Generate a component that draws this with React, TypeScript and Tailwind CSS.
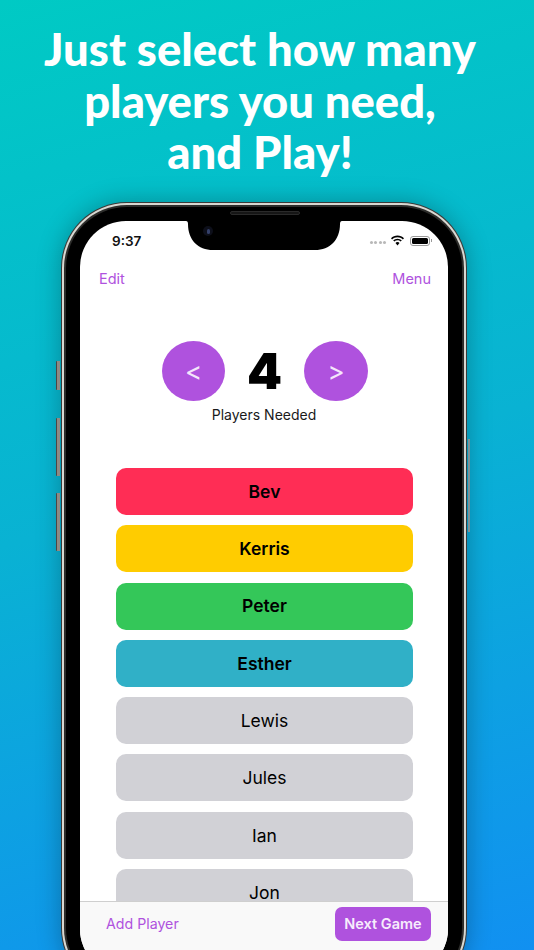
import React from "react";

const players = [
  { name: "Bev", cls: "bg-[#ff2d55] font-semibold" },
  { name: "Kerris", cls: "bg-[#ffcc00] font-semibold" },
  { name: "Peter", cls: "bg-[#34c759] font-semibold" },
  { name: "Esther", cls: "bg-[#30b0c7] font-semibold" },
  { name: "Lewis", cls: "bg-[#d1d1d6]" },
  { name: "Jules", cls: "bg-[#d1d1d6]" },
  { name: "Ian", cls: "bg-[#d1d1d6]" },
  { name: "Jon", cls: "bg-[#d1d1d6]" },
];

function Notch() {
  return (
    <svg className="absolute left-[105px] top-[-3px] z-10" width="158" height="33" viewBox="0 0 158 33">
      <path d="M0 0 H158 V3 H157 Q155 3 155 6 C155 22 145 32 130 32 H28 C13 32 3 22 3 6 Q3 3 1 3 H0 Z" fill="#000" />
    </svg>
  );
}

function StatusIcons() {
  return (
    <div className="flex items-center">
      <div className="flex gap-[1.5px] mr-[4px] mt-[3px]">
        <span className="block w-[3px] h-[3px] rounded-full bg-[#b8b8b8]" />
        <span className="block w-[3px] h-[3px] rounded-full bg-[#b8b8b8]" />
        <span className="block w-[3px] h-[3px] rounded-full bg-[#b8b8b8]" />
        <span className="block w-[3px] h-[3px] rounded-full bg-[#b8b8b8]" />
      </div>
      <svg width="15" height="11" viewBox="0 0 15 11" className="mr-[5px]">
        <path d="M7.5 2.2c2.100 0 4 .8 5.400 2.200l1.100-1.100C12.300 1.600 10 .6 7.500.6S2.700 1.600 1 3.300l1.100 1.100C3.500 3 5.400 2.200 7.500 2.200z" fill="#000" />
        <path d="M7.500 5.300c1.200 0 2.300.5 3.200 1.300l1.100-1.100C10.600 4.400 9.100 3.700 7.500 3.700s-3.100.7-4.300 1.800l1.100 1.100c.9-.8 2-1.300 3.200-1.300z" fill="#000" />
        <path d="M7.500 10.400l2-2.400C9 7.400 8.300 7 7.500 7S6 7.400 5.500 8z" fill="#000" />
      </svg>
      <div className="w-[20px] h-[10px] rounded-[3px] border border-[#9a9a9a] p-[1px]">
        <div className="w-full h-full rounded-[1.5px] bg-black" />
      </div>
      <div className="w-[1px] h-[3px] bg-[#9a9a9a] ml-[1px]" />
    </div>
  );
}

export default function App() {
  return (
    <div className="h-[950px] w-[534px] overflow-hidden bg-[linear-gradient(165deg,#00cac4_0%,#09b2d3_50%,#1190f1_100%)] [font-family:Inter,'Liberation_Sans',sans-serif]">
      <h1 className="h-[178px] pt-[23px] pr-[14px] text-center text-[45.4px] leading-[51.5px] font-black text-white [font-family:Lato,'Open_Sans',sans-serif]">
        Just select how many
        <br />
        players you need,
        <br />
        and Play!
      </h1>

      <div className="relative ml-[61px] mt-[24px] w-[406px] h-[792px] rounded-[66px] bg-[#3a3a38] p-[1px] shadow-[0_0_24px_rgba(0,0,0,0.28)]">
        {/* Side buttons */}
        <div className="absolute left-[-5px] top-[159px] w-[4px] h-[29px] rounded-l-[1px] bg-[#8f8a84] border-l border-[#4a4745]" />
        <div className="absolute left-[-5px] top-[216px] w-[4px] h-[58px] rounded-l-[1px] bg-[#8f8a84] border-l border-[#4a4745]" />
        <div className="absolute left-[-5px] top-[291px] w-[4px] h-[58px] rounded-l-[1px] bg-[#8f8a84] border-l border-[#4a4745]" />
        <div className="absolute right-[-3px] top-[237px] w-[2px] h-[93px] bg-[#7f9296]" />

        <div className="h-full rounded-[65px] bg-[#d8d8d2] p-[2px]">
          <div className="h-full rounded-[63px] bg-[#2c2c2a] p-[2px]">
            <div className="relative h-full rounded-[61px] bg-black p-[14px]">
              {/* Speaker and camera */}
              <div className="absolute left-[164px] top-[4px] z-20 w-[70px] h-[4px] rounded-full bg-[#161616] border border-[#2a2a2a]" />
              <div className="absolute left-[137px] top-[19px] z-20 w-[10px] h-[10px] rounded-full bg-[#0d0f1a] flex items-center justify-center">
                <div className="w-[3px] h-[5px] rounded-full bg-[#34406a]" />
              </div>

              <div className="relative flex h-full flex-col overflow-hidden rounded-[46px] bg-white">
                <Notch />

                {/* Status bar */}
                <div className="flex h-[43px] shrink-0 items-start justify-between pl-[32px] pr-[16px] pt-[11px]">
                  <span className="text-[13.5px] leading-[18px] font-semibold text-[#111]">9:37</span>
                  <div className="pt-[3px]">
                    <StatusIcons />
                  </div>
                </div>

                {/* Nav */}
                <div className="flex shrink-0 justify-between pl-[19px] pr-[17px] pt-[6px] text-[14.5px] leading-[18px] text-[#af52de]">
                  <span>Edit</span>
                  <span>Menu</span>
                </div>

                {/* Stepper */}
                <div className="mt-[53px] flex shrink-0 items-center pl-[82px]">
                  <div className="flex h-[60px] w-[63px] items-center justify-center rounded-[50%] bg-[#af52de] text-[26px] text-[#f4e6fb]">
                    &lt;
                  </div>
                  <div className="w-[79px] text-center text-[50px] leading-[60px] font-black text-black">
                    4
                  </div>
                  <div className="flex h-[60px] w-[64px] items-center justify-center rounded-[50%] bg-[#af52de] text-[26px] text-[#f4e6fb]">
                    &gt;
                  </div>
                </div>
                <div className="mt-[5px] shrink-0 text-center text-[14px] leading-[18px] text-[#1a1a1a]">
                  Players Needed
                </div>

                {/* List */}
                <div className="mt-[44px] min-h-0 flex-1 overflow-hidden pl-[36px] pr-[35px]">
                  <div className="flex flex-col gap-[10.3px]">
                    {players.map((p) => (
                      <div
                        key={p.name}
                        className={`flex h-[47px] shrink-0 items-center justify-center rounded-[10px] pt-[1px] text-[17.5px] text-black ${p.cls}`}
                      >
                        {p.name}
                      </div>
                    ))}
                  </div>
                </div>

                {/* Bottom bar */}
                <div className="flex h-[74px] shrink-0 items-start justify-between border-t border-[#cfcfcf] bg-[#f9f9f9] pl-[26px] pr-[17px] pt-[5px]">
                  <span className="mt-[8px] text-[14.2px] leading-[18px] text-[#af52de]">Add Player</span>
                  <div className="flex h-[34px] w-[96px] items-center justify-center rounded-[7px] bg-[#af52de] text-[14.5px] font-semibold text-[#f7ecfc]">
                    Next Game
                  </div>
                </div>
              </div>
            </div>
          </div>
        </div>
      </div>
    </div>
  );
}
